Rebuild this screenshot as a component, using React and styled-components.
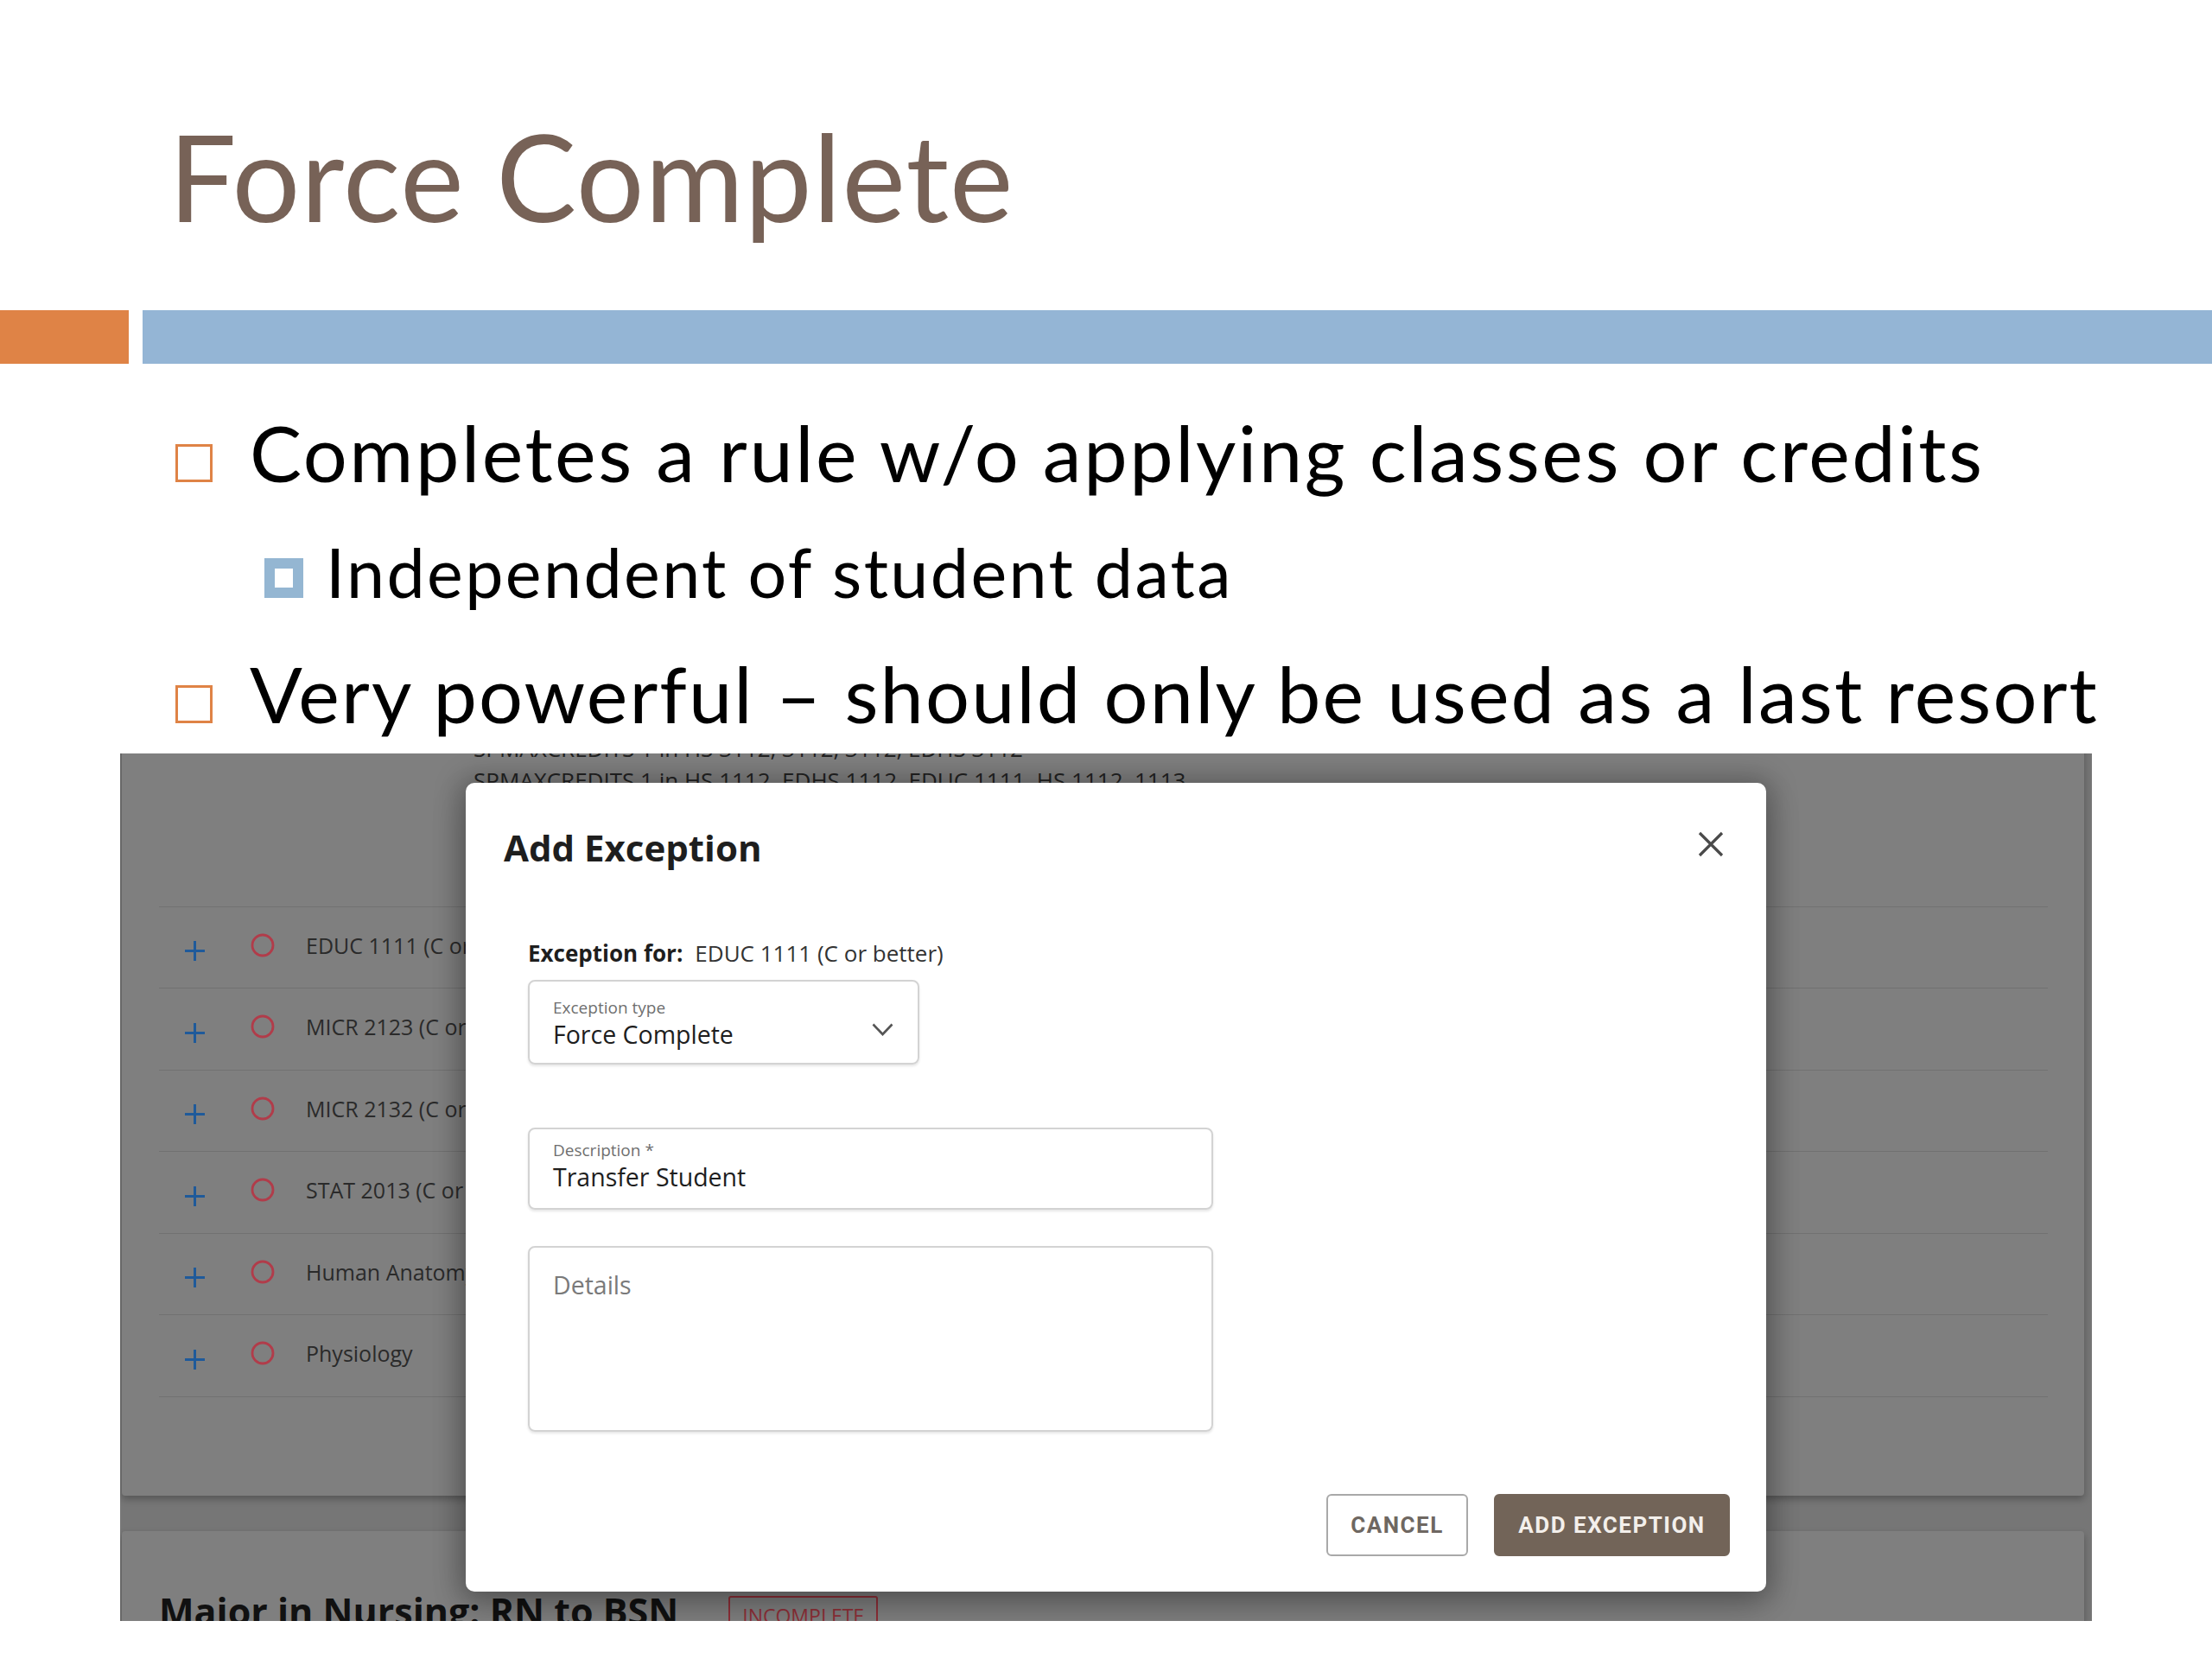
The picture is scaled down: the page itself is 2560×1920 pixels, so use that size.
import styled, { createGlobalStyle } from "styled-components";

const GlobalStyle = createGlobalStyle`
  body {
    margin: 0;
    background: #ffffff;
  }
  * {
    box-sizing: border-box;
  }
`;

// Slide shell
const Slide = styled.div`
  width: 2560px;
  height: 1920px;
  background: #ffffff;
  overflow: hidden;
  font-family: Lato, "Open Sans", sans-serif;
`;

const Title = styled.h1`
  margin: 0;
  padding: 121px 0 0 195px;
  font-size: 139px;
  font-weight: 400;
  line-height: 1.2;
  letter-spacing: 1px;
  color: #776257;
`;

const Bars = styled.div`
  display: flex;
  gap: 16px;
  height: 62px;
  margin-top: 71px;
`;

const Bar = styled.div`
  background: ${(p) => p.$color};
  width: ${(p) => p.$width || "auto"};
  flex: ${(p) => (p.$grow ? 1 : "none")};
`;

// Bullets
const BulletList = styled.ul`
  list-style: none;
  margin: 48px 0 0;
  padding: 0 0 0 203px;
  display: flex;
  flex-direction: column;
  gap: 38px;
`;

const Item = styled.li`
  display: flex;
  align-items: baseline;
  gap: ${(p) => (p.$sub ? "26px" : "43px")};
  padding-left: ${(p) => (p.$sub ? "103px" : "0")};
  font-size: ${(p) => (p.$sub ? "79px" : "90px")};
  line-height: 1.2;
  letter-spacing: ${(p) => p.$spacing};
  color: #000000;
  white-space: nowrap;
`;

const HollowMark = styled.span`
  flex: none;
  width: 43px;
  height: 44px;
  border: 3px solid #df8346;
`;

const BoxMark = styled.span`
  flex: none;
  width: 45px;
  height: 46px;
  border: 12px solid #94b6d2;
  background: #ffffff;
`;

// Screenshot of the app, dimmed behind the dialog
const ScreenFrame = styled.div`
  position: relative;
  margin: 16px 0 0 139px;
  width: 2282px;
  height: 1004px;
  overflow: hidden;
  background: #767676;
  font-family: "Open Sans", "Noto Sans", sans-serif;
`;

const Page = styled.div`
  display: flex;
  flex-direction: column;
  gap: 41px;
  margin-top: -64px;
  padding: 0 9px 0 2px;
`;

const Card = styled.div`
  background: #7f7f7f;
  border-radius: 4px;
  box-shadow: 0 4px 8px rgba(0, 0, 0, 0.28);
  padding: ${(p) => p.$pad};
`;

const Rules = styled.div`
  margin-left: 364px;
  font-size: 26px;
  line-height: 37px;
  color: #222222;
  white-space: nowrap;
`;

const CourseList = styled.ul`
  list-style: none;
  margin: 127px 0 0;
  padding: 0;
  border-top: 1px solid #717171;
`;

const CourseRow = styled.li`
  display: flex;
  align-items: center;
  height: 94.5px;
  padding-left: 29px;
  padding-bottom: 5px;
  border-bottom: 1px solid #717171;
  font-size: 25px;
  color: #2a2a2a;
  white-space: nowrap;
`;

const PlusIcon = styled.svg`
  flex: none;
  margin-top: 14px;
`;

const RingIcon = styled.svg`
  flex: none;
  margin: 0 36px 0 52px;
`;

const SectionHead = styled.div`
  display: flex;
  align-items: flex-start;
  gap: 58px;
`;

const SectionTitle = styled.h3`
  margin: 0;
  font-size: 43px;
  font-weight: 700;
  line-height: 60px;
  color: #111111;
`;

const StatusBadge = styled.span`
  margin-top: 12px;
  padding: 6px 14px;
  border: 2px solid #8e2f38;
  border-radius: 3px;
  font-size: 23px;
  line-height: 30px;
  color: #8e2f38;
`;

// Dialog
const Overlay = styled.div`
  position: absolute;
  inset: 0;
  padding: 34px 0 0 400px;
`;

const Dialog = styled.div`
  display: flex;
  flex-direction: column;
  width: 1505px;
  height: 936px;
  background: #ffffff;
  border-radius: 10px;
  box-shadow: 0 0 30px 8px rgba(0, 0, 0, 0.22), 0 16px 40px rgba(0, 0, 0, 0.2);
`;

const DialogHeader = styled.div`
  display: flex;
  justify-content: space-between;
  align-items: flex-start;
  padding: 51px 49px 0 44px;
`;

const DialogTitle = styled.h2`
  margin: 0;
  font-size: 42px;
  font-weight: 700;
  line-height: 48px;
  color: #1e1e1e;
`;

const CloseButton = styled.button`
  display: flex;
  margin-top: 5px;
  padding: 0;
  border: none;
  background: none;
`;

const DialogBody = styled.div`
  display: flex;
  flex-direction: column;
  align-items: flex-start;
  margin-top: 81px;
  padding: 0 72px;
`;

const ForLine = styled.div`
  font-size: 26px;
  line-height: 34px;
  color: #333333;

  strong {
    font-weight: 700;
    color: #1e1e1e;
    margin-right: 14px;
  }
`;

const Field = styled.div`
  display: flex;
  align-items: ${(p) => (p.$area ? "flex-start" : "center")};
  justify-content: space-between;
  width: ${(p) => p.$width};
  height: ${(p) => p.$height};
  margin-top: ${(p) => p.$gap};
  padding: ${(p) => p.$pad};
  border: 2px solid #d3d3d3;
  border-radius: 8px;
  box-shadow: 0 2px 3px rgba(0, 0, 0, 0.1);
`;

const FieldText = styled.div`
  display: flex;
  flex-direction: column;
  align-self: flex-start;
`;

const FieldLabel = styled.span`
  font-size: 19px;
  line-height: 25px;
  color: #6f6f6f;
`;

const FieldValue = styled.span`
  font-size: 28.5px;
  line-height: 36px;
  color: ${(p) => (p.$placeholder ? "#7a7a7a" : "#1e1e1e")};
`;

const DialogFooter = styled.div`
  display: flex;
  justify-content: flex-end;
  gap: 30px;
  margin-top: auto;
  padding: 0 42px 41px;
`;

const ActionButton = styled.button`
  width: ${(p) => p.$width};
  height: 72px;
  padding: 0;
  border: 2px solid ${(p) => (p.$primary ? "#726458" : "#a9a9a9")};
  border-radius: 6px;
  background: ${(p) => (p.$primary ? "#726458" : "#ffffff")};
  color: ${(p) => (p.$primary ? "#f3efeb" : "#6e6761")};
  font-family: Roboto, "Open Sans", sans-serif;
  font-size: 26px;
  font-weight: 700;
  letter-spacing: 1.5px;
`;

const courses = [
  "EDUC 1111 (C or better)",
  "MICR 2123 (C or better)",
  "MICR 2132 (C or better)",
  "STAT 2013 (C or better)",
  "Human Anatomy",
  "Physiology",
];

const App = () => {
  return (
    <Slide>
      <GlobalStyle />
      <Title>Force Complete</Title>
      <Bars>
        <Bar $color="#df8346" $width="149px" />
        <Bar $color="#94b5d5" $grow />
      </Bars>

      <BulletList>
        <Item $spacing="2.55px">
          <HollowMark />
          Completes a rule w/o applying classes or credits
        </Item>
        <Item $sub $spacing="2.4px">
          <BoxMark />
          Independent of student data
        </Item>
        <Item $spacing="2.15px">
          <HollowMark />
          Very powerful – should only be used as a last resort
        </Item>
      </BulletList>

      <ScreenFrame>
        <Page>
          <Card $pad="40px 42px 114px 43px">
            <Rules>
              <div>SPMAXCREDITS 1 in HS 3112, 3112, 3112, EDHS 3112</div>
              <div>SPMAXCREDITS 1 in HS 1112, EDHS 1112, EDUC 1111, HS 1112, 1113</div>
            </Rules>
            <CourseList>
              {courses.map((c) => (
                <CourseRow key={c}>
                  <PlusIcon width="25" height="25" viewBox="0 0 25 25">
                    <path d="M12.5 1 V24 M1 12.5 H24" stroke="#1f5a9a" strokeWidth="3" fill="none" />
                  </PlusIcon>
                  <RingIcon width="28" height="28" viewBox="0 0 28 28">
                    <circle cx="14" cy="14" r="12" stroke="#b13c4a" strokeWidth="2.8" fill="none" />
                  </RingIcon>
                  {c}
                </CourseRow>
              ))}
            </CourseList>
          </Card>
          <Card $pad="63px 43px 40px">
            <SectionHead>
              <SectionTitle>Major in Nursing: RN to BSN</SectionTitle>
              <StatusBadge>INCOMPLETE</StatusBadge>
            </SectionHead>
          </Card>
        </Page>

        <Overlay>
          <Dialog>
            <DialogHeader>
              <DialogTitle>Add Exception</DialogTitle>
              <CloseButton aria-label="Close">
                <svg width="30" height="30" viewBox="0 0 30 30">
                  <path d="M2 2 L28 28 M28 2 L2 28" stroke="#4a4a4a" strokeWidth="3.2" fill="none" />
                </svg>
              </CloseButton>
            </DialogHeader>

            <DialogBody>
              <ForLine>
                <strong>Exception for:</strong>EDUC 1111 (C or better)
              </ForLine>
              <Field $width="453px" $height="98px" $gap="14px" $pad="18px 28px 0 27px">
                <FieldText>
                  <FieldLabel>Exception type</FieldLabel>
                  <FieldValue>Force Complete</FieldValue>
                </FieldText>
                <svg width="25" height="15" viewBox="0 0 25 15">
                  <path d="M1.5 1.5 L12.5 13 L23.5 1.5" stroke="#555555" strokeWidth="2.6" fill="none" />
                </svg>
              </Field>
              <Field $width="793px" $height="95px" $gap="73px" $pad="12px 27px 0">
                <FieldText>
                  <FieldLabel>Description *</FieldLabel>
                  <FieldValue>Transfer Student</FieldValue>
                </FieldText>
              </Field>
              <Field $area $width="793px" $height="215px" $gap="42px" $pad="25px 27px">
                <FieldValue $placeholder>Details</FieldValue>
              </Field>
            </DialogBody>

            <DialogFooter>
              <ActionButton $width="164px">CANCEL</ActionButton>
              <ActionButton $primary $width="273px">ADD EXCEPTION</ActionButton>
            </DialogFooter>
          </Dialog>
        </Overlay>
      </ScreenFrame>
    </Slide>
  );
};

export default App;
